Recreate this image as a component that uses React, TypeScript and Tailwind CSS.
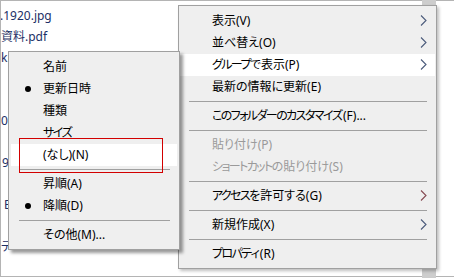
import React from 'react';

const FONT = '"Noto Sans","Noto Sans CJK JP",sans-serif';

interface MenuRow {
  label?: string;
  disabled?: boolean;
  arrow?: string;
  active?: boolean;
  bullet?: boolean;
  sep?: boolean;
}

const mainItems: MenuRow[] = [
  { label: '表示(V)', arrow: '#4b5b7b' },
  { label: '並べ替え(O)', arrow: '#4b5b7b' },
  { label: 'グループで表示(P)', arrow: '#4b5b7b', active: true },
  { label: '最新の情報に更新(E)' },
  { sep: true },
  { label: 'このフォルダーのカスタマイズ(F)...' },
  { sep: true },
  { label: '貼り付け(P)', disabled: true },
  { label: 'ショートカットの貼り付け(S)', disabled: true },
  { sep: true },
  { label: 'アクセスを許可する(G)', arrow: '#864a52' },
  { sep: true },
  { label: '新規作成(X)', arrow: '#4b5b7b' },
  { sep: true },
  { label: 'プロパティ(R)' },
];

const subItems: MenuRow[] = [
  { label: '名前' },
  { label: '更新日時', bullet: true },
  { label: '種類' },
  { label: 'サイズ' },
  { label: '(なし)(N)', active: true },
  { sep: true },
  { label: '昇順(A)' },
  { label: '降順(D)', bullet: true },
  { sep: true },
  { label: 'その他(M)...' },
];

// file names in the explorer pane, mostly hidden behind the menus
const files: { text: string; shift: string }[] = [
  { text: '.1920.jpg', shift: 'ml-[-1px]' },
  { text: '資料.pdf', shift: 'ml-0' },
  { text: 'k.xlsx', shift: 'ml-0' },
  { text: '', shift: '' },
  { text: '', shift: '' },
  { text: '02', shift: 'ml-0' },
  { text: '', shift: '' },
  { text: '9(1).png', shift: 'ml-[1px]' },
  { text: '', shift: '' },
  { text: 'E', shift: 'ml-[3px]' },
  { text: '', shift: '' },
  { text: 'テ', shift: 'ml-0' },
];

// menu font on Windows has narrow kana; tighten longer kana runs (except the last glyph)
const Label = ({ text }: { text: string }) => (
  <>
    {text.split(/([\u3040-\u30ff]{3,})/).map((part, i) =>
      i % 2 === 1 ? (
        <span key={i}>
          <span className="tracking-[-1.6px]">{part.slice(0, -1)}</span>
          <span>{part.slice(-1)}</span>
        </span>
      ) : (
        <span key={i}>{part}</span>
      )
    )}
  </>
);

const Chevron = ({ color }: { color: string }) => (
  <svg width="7" height="11" viewBox="0 0 7 11" className="shrink-0">
    <polyline points="1,0.5 6,5.5 1,10.5" fill="none" stroke={color} strokeWidth="1.1" />
  </svg>
);

const App: React.FC = () => {
  return (
    <div
      className="relative w-[454px] h-[278px] overflow-hidden bg-white text-[12px] text-black [font-feature-settings:'palt']"
      style={{ fontFamily: FONT }}
    >
      <div className="h-[277px] border-l border-t border-b border-[#b4b4b4] overflow-hidden">
        {/* file list */}
        <div className="flex flex-col pt-[4px]">
          {files.map((f, i) => (
            <div key={i} className="h-[21px] flex items-center whitespace-nowrap text-[#1c2f66]">
              <span className={f.shift}>{f.text}</span>
            </div>
          ))}
        </div>
      </div>

      {/* scrollbar strip behind the menu */}
      <div className="absolute left-[422px] top-0 w-[14px] h-[278px] bg-[#cdcdcd]" />

      {/* main context menu */}
      <div className="absolute left-[178px] top-[5px] w-[259px] border border-[#a0a0a0] bg-[#efefef] pt-[4px] pb-[3px] shadow-[2px_2px_3px_rgba(0,0,0,0.25)]">
        {mainItems.map((it, i) =>
          it.sep ? (
            <div key={i} className="h-[7px] pt-[3px] pl-[10px] pr-[9px]">
              <div className="h-px bg-[#a0a0a0]" />
            </div>
          ) : (
            <div
              key={i}
              className={`h-[22px] mx-[1px] flex items-center pl-[32px] pr-[8px] pb-[1px] ${
                it.active ? 'bg-white' : ''
              }`}
            >
              <span className={`flex-1 whitespace-nowrap ${it.disabled ? 'text-[#9a9a9a]' : ''}`}>
                <Label text={it.label ?? ''} />
              </span>
              {it.arrow && <Chevron color={it.arrow} />}
            </div>
          )
        )}
      </div>

      {/* group-by submenu */}
      <div className="absolute left-[8px] top-[51px] w-[172px] border border-[#a0a0a0] bg-[#efefef] pt-[4px] pb-[3px] shadow-[3px_3px_3px_rgba(0,0,0,0.4)]">
        {subItems.map((it, i) =>
          it.sep ? (
            <div key={i} className="h-[7px] pt-[3px] pl-[10px] pr-[9px]">
              <div className="h-px bg-[#a0a0a0]" />
            </div>
          ) : (
            <div
              key={i}
              className={`h-[22px] mx-[2px] flex items-center pb-[1px] ${it.active ? 'bg-white' : ''}`}
            >
              <span className="w-[32px] flex justify-center pl-[1px]">
                {it.bullet && <span className="block w-[6px] h-[6px] rounded-full bg-black" />}
              </span>
              <span className="whitespace-nowrap">
                <Label text={it.label ?? ''} />
              </span>
            </div>
          )
        )}
      </div>

      {/* red annotation box */}
      <div className="absolute left-[19px] top-[138px] w-[144px] h-[35px] border border-[#d20000]" />
    </div>
  );
};

export default App;
